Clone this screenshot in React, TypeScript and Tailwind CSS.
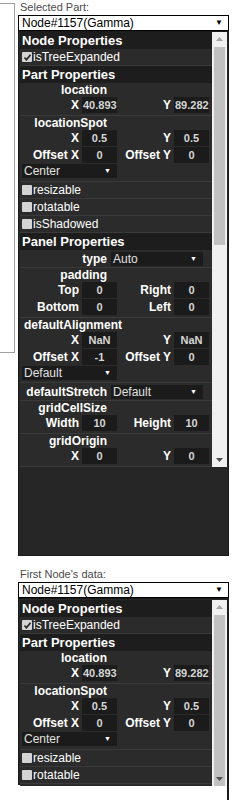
import React from 'react';

const font = { fontFamily: '"Liberation Sans", Arial, sans-serif' };

const Header: React.FC<{ title: string }> = ({ title }) => (
  <div className="h-[17px] bg-[#1d1d1d] px-[2px] text-[13px] font-bold leading-[17px] text-white">{title}</div>
);

const Box: React.FC<{ checked?: boolean }> = ({ checked }) => (
  <span className="mr-[1px] flex h-[10px] w-[10px] items-center justify-center rounded-[1px] bg-[#d4d4d4]">
    {checked && (
      <svg width="9" height="9" viewBox="0 0 9 9">
        <path d="M1.5 4.5 L3.5 6.8 L7.5 1.8" stroke="#222" strokeWidth="1.6" fill="none" />
      </svg>
    )}
  </span>
);

const CheckRow: React.FC<{ label: string; checked?: boolean }> = ({ label, checked }) => (
  <div className="flex h-[17px] items-center border-b border-[#3a3a3a] bg-[#2b2b2b] px-[2px] text-[12px] text-white">
    <Box checked={checked} />
    <span>{label}</span>
  </div>
);

const Input: React.FC<{ value: string; left?: boolean }> = ({ value, left }) => (
  <div
    className={`ml-[3px] h-[16px] w-[35px] overflow-hidden whitespace-nowrap bg-[#1b1b1b] text-[11px] leading-[16px] text-[#d6d6d6] ${
      left ? 'pl-[1px] text-left' : 'text-center'
    }`}
  >
    {value}
  </div>
);

const PairRow: React.FC<{ a: string; av: string; b: string; bv: string; left?: boolean }> = ({ a, av, b, bv, left }) => (
  <div className="flex h-[17px] items-start text-[12px] font-bold leading-[16px] text-white">
    <div className="w-[57px] text-right">{a}</div>
    <Input value={av} left={left} />
    <div className="w-[54px] text-right">{b}</div>
    <Input value={bv} left={left} />
  </div>
);

const MiniSelect: React.FC<{ value: string; w: string }> = ({ value, w }) => (
  <div className={`flex h-[14px] ${w} items-center justify-between bg-[#1b1b1b] pl-[2px] pr-[6px] text-[12px] leading-[14px] text-[#e0e0e0]`}>
    <span>{value}</span>
    <span className="text-[7px] text-white">▼</span>
  </div>
);

const GroupLabel: React.FC<{ text: string; left?: boolean }> = ({ text, left }) => (
  <div className={`h-[13px] text-[12px] font-bold leading-[13px] text-white ${left ? 'pl-[2px]' : 'w-[85px] text-right'}`}>
    {text}
  </div>
);

const Group: React.FC<{ children: React.ReactNode }> = ({ children }) => (
  <div className="border-b border-[#3a3a3a] bg-[#2b2b2b] px-[2px] py-[1px]">{children}</div>
);

const SelectRow: React.FC<{ label: string; value: string }> = ({ label, value }) => (
  <div className="flex h-[18px] items-center border-b border-[#3a3a3a] bg-[#2b2b2b] px-[2px]">
    <div className="w-[85px] text-right text-[12px] font-bold text-white">{label}</div>
    <div className="ml-[4px]">
      <MiniSelect value={value} w="w-[92px]" />
    </div>
  </div>
);

const Scrollbar: React.FC<{ thumbTop: number; thumbH: number }> = ({ thumbTop, thumbH }) => (
  <div className="relative w-[15px] bg-[#f0f0f0]">
    <div className="flex h-[14px] items-center justify-center">
      <svg width="7" height="4" viewBox="0 0 7 4">
        <path d="M0 4 L3.5 0 L7 4 Z" fill="#a3a3a3" />
      </svg>
    </div>
    <div className="absolute left-[2px] right-[2px] bg-[#c1c1c1]" style={{ top: thumbTop, height: thumbH }} />
    <div className="absolute bottom-0 flex h-[14px] w-full items-center justify-center">
      <svg width="7" height="4" viewBox="0 0 7 4">
        <path d="M0 0 L7 0 L3.5 4 Z" fill="#505050" />
      </svg>
    </div>
  </div>
);

const Inspector: React.FC<{ height: string; thumbTop: number; thumbH: number }> = ({ height, thumbTop, thumbH }) => (
  <div className={`flex ${height} overflow-hidden`}>
    <div className="w-[192px] bg-[#262626]">
      <Header title="Node Properties" />
      <CheckRow label="isTreeExpanded" checked />
      <Header title="Part Properties" />
      <Group>
        <GroupLabel text="location" />
        <PairRow a="X" av="40.8930" b="Y" bv="89.2829" left />
      </Group>
      <Group>
        <GroupLabel text="locationSpot" />
        <PairRow a="X" av="0.5" b="Y" bv="0.5" />
        <PairRow a="Offset X" av="0" b="Offset Y" bv="0" />
        <div className="h-[16px]">
          <MiniSelect value="Center" w="w-[95px]" />
        </div>
      </Group>
      <CheckRow label="resizable" />
      <CheckRow label="rotatable" />
      <CheckRow label="isShadowed" />
      <Header title="Panel Properties" />
      <SelectRow label="type" value="Auto" />
      <Group>
        <GroupLabel text="padding" />
        <PairRow a="Top" av="0" b="Right" bv="0" />
        <PairRow a="Bottom" av="0" b="Left" bv="0" />
      </Group>
      <Group>
        <GroupLabel text="defaultAlignment" left />
        <PairRow a="X" av="NaN" b="Y" bv="NaN" />
        <PairRow a="Offset X" av="-1" b="Offset Y" bv="0" />
        <div className="h-[15px]">
          <MiniSelect value="Default" w="w-[95px]" />
        </div>
      </Group>
      <SelectRow label="defaultStretch" value="Default" />
      <Group>
        <GroupLabel text="gridCellSize" />
        <PairRow a="Width" av="10" b="Height" bv="10" />
      </Group>
      <Group>
        <GroupLabel text="gridOrigin" />
        <PairRow a="X" av="0" b="Y" bv="0" />
      </Group>
    </div>
    <Scrollbar thumbTop={thumbTop} thumbH={thumbH} />
  </div>
);

const PartSelect: React.FC = () => (
  <div className="flex h-[16px] items-center justify-between border border-black bg-white pl-[3px] pr-[5px] text-[12px] leading-[14px] text-black">
    <span>Node#1157(Gamma)</span>
    <span className="text-[8px]">▼</span>
  </div>
);

export default function App() {
  return (
    <div className="flex h-[800px] w-[244px] overflow-hidden bg-white" style={font}>
      <div className="mt-[3px] h-[350px] w-[15px] border-y border-r border-[#a0a0a0]" />
      <div className="ml-[3px] w-[211px]">
        <div className="h-[15px] pl-[2px] text-[11px] leading-[15px] text-[#4a4a4a]">Selected Part:</div>
        <PartSelect />
        <div className="h-[525px] border border-[#1a1a1a] bg-[#262626] pl-[1px] pr-[1px]">
          <Inspector height="h-[435px]" thumbTop={15} thumbH={198} />
        </div>
        <div className="mt-[11px] h-[15px] pl-[2px] text-[11px] leading-[15px] text-[#4a4a4a]">First Node's data:</div>
        <PartSelect />
        <div className="flex h-[220px]">
          <div className="h-[187px] w-[209px] border-l border-t border-[#1a1a1a] bg-[#262626] pl-[1px] pt-[1px]">
            <Inspector height="h-[186px]" thumbTop={15} thumbH={200} />
          </div>
          <div className="w-[2px] bg-[#1a1a1a]" />
        </div>
      </div>
    </div>
  );
}
